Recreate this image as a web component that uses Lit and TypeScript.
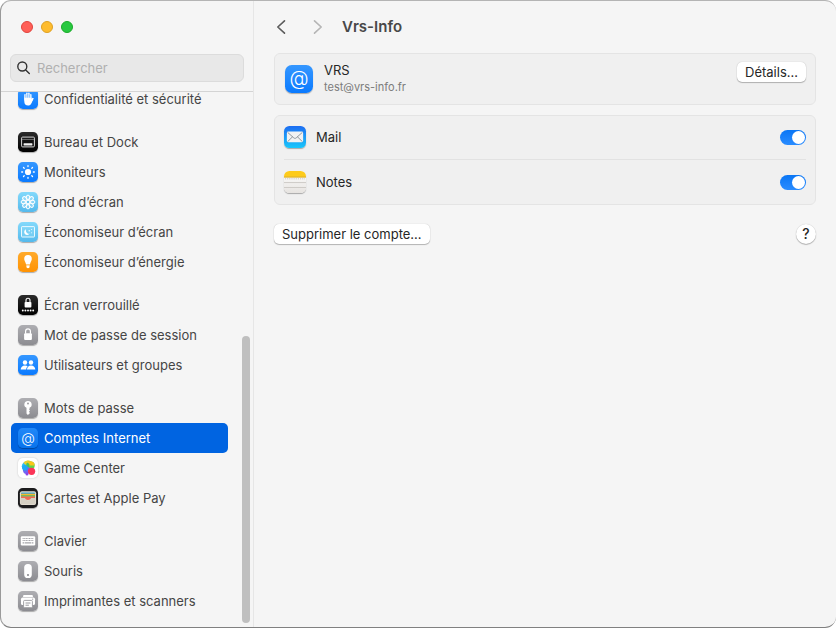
import { LitElement, html, svg, css } from "lit";
import { customElement, property } from "lit/decorators.js";
import { classMap } from "lit/directives/class-map.js";

const glyphs: Record<string, unknown> = {
  hand: svg`<g fill="none" stroke="#fff" stroke-linecap="round" stroke-width="1.5">
    <path d="M7 11V5.8M8.9 10V4.300M10.900 10V4.300M12.800 11V5.800M14.800 9.600 12.800 13"/></g>
    <path fill="#fff" d="M6.300 8.600h7.200v2l1.300-1.600.7.6-2.200 4.800c-.7 1.400-1.700 2-3.200 2-2.400 0-3.800-1.600-3.800-4z"/>
    <path d="M7.950 5.800V9M9.900 5V9M11.850 5.800V9" stroke="#3d9bff" stroke-width=".4"/>`,
  dock: svg`<rect x="3.600" y="5.100" width="12.800" height="9.800" rx="1" fill="#111" stroke="#d8d8d8" stroke-width="1"/>
    <path d="M4 7.400h12" stroke="#8a8a8a" stroke-width=".8"/>
    <rect x="5.600" y="11.300" width="8.800" height="2.200" rx=".4" fill="#f2f2f2"/>`,
  sun: svg`<circle cx="10" cy="10" r="3.100" fill="#fff"/>
    <g stroke="#fff" stroke-width="1.300" stroke-linecap="round"><path d="M10 3.700v.9M10 15.400v.9M3.700 10h.9M15.400 10h.9M5.500 5.500l.7.7M13.800 13.800l.7.7M5.500 14.500l.7-.7M13.800 6.200l.7-.7"/></g>`,
  flower: svg`<g fill="#ffffff38" stroke="#fff" stroke-width="1">
    ${[0, 45, 90, 135, 180, 225, 270, 315].map(
      (a) => svg`<ellipse cx="10" cy="5.500" rx="1.800" ry="2.400" transform="rotate(${a} 10 10)"/>`
    )}</g><circle cx="10" cy="10" r="1.800" fill="#6cc9f3" stroke="#fff" stroke-width="1"/>`,
  saver: svg`<rect x="3.500" y="4.600" width="13" height="10.400" rx=".6" fill="#8fdcf8" fill-opacity=".4" stroke="#e9f9ff" stroke-width="1"/>
    <path fill="#fff" d="M8 7.200a3 3 0 1 0 3.700 4.400C9.200 12.300 7.400 9.700 8 7.200z"/>
    <circle cx="11.200" cy="8.800" r=".7" fill="#fff"/><circle cx="13.600" cy="10.800" r=".5" fill="#fff"/><circle cx="13.600" cy="7.500" r=".5" fill="#fff"/>`,
  bulb: svg`<path fill="#fff" d="M10 3a3.800 3.800 0 0 0-3.800 3.900c0 2 1.500 3 1.900 5.600h3.800c.4-2.600 1.900-3.600 1.900-5.600A3.800 3.800 0 0 0 10 3zM8.400 13.200h3.200v1.300c0 1-.6 1.700-1.600 1.700s-1.600-.7-1.600-1.700z"/>
    <path d="M8.200 12.900h3.600" stroke="#ffc46b" stroke-width=".6"/>`,
  lockdots: svg`<rect x="6.600" y="6.900" width="6.800" height="5.600" rx=".9" fill="#fff"/>
    <path d="M8 7.200V5.300a2 2 0 0 1 4 0v1.900" fill="none" stroke="#fff" stroke-width="1.100"/>
    <g fill="#fff"><circle cx="4.800" cy="15.500" r=".95"/><circle cx="7.400" cy="15.500" r=".95"/><circle cx="10" cy="15.500" r=".95"/><circle cx="12.600" cy="15.500" r=".95"/><circle cx="15.200" cy="15.500" r=".95"/></g>`,
  lock: svg`<rect x="6.100" y="8.200" width="7.800" height="6.700" rx="1" fill="#fff"/>
    <path d="M7.600 8.700V6.200a2.400 2.400 0 0 1 4.800 0v2.500" fill="none" stroke="#fff" stroke-width="1.200"/>`,
  users: svg`<g fill="#fff"><circle cx="7" cy="7.500" r="2.200"/><circle cx="13" cy="7.500" r="2.200"/>
    <path d="M2.700 14.600c0-2.600 1.800-4.200 4.300-4.200 1.100 0 2 .3 2.700.9-1 .9-1.500 1.900-1.500 3.300zM9 14.600c0-2.600 1.600-4.200 4-4.200 2.600 0 4.300 1.600 4.300 4.200z"/></g>`,
  key: svg`<path fill="#fff" fill-rule="evenodd" d="M10 2.900a3.600 3.600 0 0 0-1.500 6.900v5.600l1.400 1.500 2.100-2-1.100-1.100 1.100-1.200-1-1.100.5-.6V9.800A3.600 3.600 0 0 0 10 2.900zm0 1.500a1.100 1.100 0 1 1 0 2.200 1.100 1.100 0 0 1 0-2.200z"/>`,
  game: svg`<circle cx="8.500" cy="8.200" r="4.700" fill="#2fbdf3"/>
    <path d="M5.400 5a5 5 0 0 1 8.200-.9L10.500 9z" fill="#e8cf2b"/>
    <circle cx="12.600" cy="7.600" r="4.100" fill="#5fd34b"/>
    <path d="M9.400 4.600a4.200 4.200 0 0 1 7.300 3H11z" fill="#f9c51a"/>
    <path d="M8.600 5.300c1.500-.6 2.700.2 2.900 1.800L10.600 11 8 9.500z" fill="#42c65c"/>
    <circle cx="8.600" cy="12.300" r="3.600" fill="#6f66f3"/><circle cx="6.900" cy="9.800" r="2.800" fill="#1fa9f2"/>
    <circle cx="9" cy="16" r="1.500" fill="#8b46e8"/><circle cx="13.600" cy="13.300" r="3.600" fill="#fb3558"/>`,
  wallet: svg`<rect x="1.900" y="3.200" width="16.200" height="13.800" rx="2" fill="#e4dfd3"/>
    <path d="M3 6.200V5.400c0-.6.500-1 1-1h12c.5 0 1 .4 1 1v.8z" fill="#3d9fd0"/>
    <path d="M3 5.800h14v1.700H3z" fill="#f7b92c"/><path d="M3 7.300h14v1.500H3z" fill="#58b547"/><path d="M3 8.400h14v2.200H3z" fill="#f06a55"/>
    <path d="M2.600 10h3.900c1.300 0 1.100 2.400 3.500 2.400s2.200-2.400 3.500-2.400h3.900v5c0 .8-.5 1.300-1.300 1.300H3.900c-.8 0-1.300-.5-1.300-1.300z" fill="#d5d0c4"/>
    <path d="M6.800 9.700h6.400c-.6 1.200-1 2.300-3.200 2.300S7.400 10.900 6.800 9.700z" fill="#ee6b56"/>`,
  keyboard: svg`<rect x="2.800" y="5.300" width="14.400" height="9.200" rx="1.200" fill="#fff"/>
    <path d="M4.600 7.500h10.800M4.600 9.500h10.800" stroke="#a5a5aa" stroke-width="1.200" stroke-dasharray="1.100 .5"/>
    <path d="M4.600 11.800h1.500m.6 0h6.600m.6 0h1.500" stroke="#a5a5aa" stroke-width="1.200"/>`,
  mouse: svg`<rect x="6.200" y="3" width="7.600" height="14" rx="3.600" fill="#fff"/><circle cx="10" cy="14" r=".9" fill="#77777c"/>`,
  printer: svg`<path d="M6.300 3.900h7.400c.7 0 1.200.5 1.200 1.200v.9H5.100v-.9c0-.7.500-1.200 1.200-1.200z" fill="#fff"/>
    <rect x="3" y="6.600" width="14" height="7.400" rx="1.600" fill="#fff"/>
    <rect x="5.600" y="9.400" width="8.800" height="7.300" rx="1" fill="#fff" stroke="#98989d" stroke-width=".9"/>
    <path d="M7.500 12h5M7.500 14.200h3.400" stroke="#98989d" stroke-width="1"/><circle cx="14.700" cy="8.200" r=".6" fill="#98989d"/>`,
  mail: svg`<rect x="2.600" y="5.100" width="14.800" height="9.700" rx="1.300" fill="#f1f2f3"/>
    <path d="M3.300 14.200 8 9.600m4 0 4.700 4.600M3.300 5.800l5.600 5c.7.6 1.500.6 2.200 0l5.600-5" fill="none" stroke="#8d969e" stroke-width=".9"/>`,
  notes: svg`<path d="M0 0h20v5.800H0z" fill="#fdcb1b"/><path d="M0 5.500h20" stroke="#c99f3c" stroke-width=".6"/>
    <path d="M1 7.100h18" stroke="#a9a6a0" stroke-width=".7" stroke-dasharray=".7 1"/>
    <path d="M0 10.500h20M0 15h20" stroke="#c9c6c2" stroke-width=".8"/>`,
};

@customElement("app-icon")
class AppIcon extends LitElement {
  @property() name = "";
  @property() tone = "blue";
  static styles = css`
    :host { display: block; flex: none; width: 20px; height: 20px; container-type: size; }
    .tile {
      width: 100%; height: 100%; border-radius: 24%; overflow: hidden;
      display: grid; place-items: center; color: #fff;
      box-shadow: 0 1px 1px #0000004d;
    }
    svg { width: 100%; height: 100%; display: block; }
    .at { font: 300 70cqh/1 Inter, sans-serif; }
    .blue { background: linear-gradient(#3597ff, #0a7aff); }
    .flat { background: linear-gradient(#2188f8, #0873ed); }
    .black { background: linear-gradient(#2b2b2b, #000); }
    .sky { background: linear-gradient(#83d9fb, #55b9ec); }
    .orange { background: linear-gradient(#ffaa2b, #ff9202); }
    .gray { background: linear-gradient(#aeaeb2, #8c8c91); }
    .white { background: #fff; box-shadow: 0 0 2px #00000033; }
    .dark { background: #1b1b1d; }
    .mail { background: linear-gradient(#1d6df2, #19c7fb); }
    .notes { background: linear-gradient(#fff, #e6e3e0); }
  `;
  render() {
    return html`<div class="tile ${this.tone}">
      ${this.name === "at"
        ? html`<span class="at" aria-hidden="true">@</span>`
        : html`<svg viewBox="0 0 20 20" aria-hidden="true">${glyphs[this.name]}</svg>`}
    </div>`;
  }
}

type Item = [label: string, icon: string, tone: string];

const groups: Item[][] = [
  [["Confidentialité et sécurité", "hand", "blue"]],
  [
    ["Bureau et Dock", "dock", "black"],
    ["Moniteurs", "sun", "blue"],
    ["Fond d’écran", "flower", "sky"],
    ["Économiseur d’écran", "saver", "sky"],
    ["Économiseur d’énergie", "bulb", "orange"],
  ],
  [
    ["Écran verrouillé", "lockdots", "black"],
    ["Mot de passe de session", "lock", "gray"],
    ["Utilisateurs et groupes", "users", "blue"],
  ],
  [
    ["Mots de passe", "key", "gray"],
    ["Comptes Internet", "at", "flat"],
    ["Game Center", "game", "white"],
    ["Cartes et Apple Pay", "wallet", "dark"],
  ],
  [
    ["Clavier", "keyboard", "gray"],
    ["Souris", "mouse", "gray"],
    ["Imprimantes et scanners", "printer", "gray"],
  ],
];

const services: Item[] = [
  ["Mail", "mail", "mail"],
  ["Notes", "notes", "notes"],
];

@customElement("app-root")
class AppRoot extends LitElement {
  @property() selected = "Comptes Internet";

  static styles = css`
    * { box-sizing: border-box; }
    :host {
      display: block; height: 100vh; background: #fff;
      font: 13px/16px Inter, sans-serif; color: #262626;
    }
    button, input { font: inherit; color: inherit; margin: 0; }
    button { border: 0; padding: 0; background: none; }
    .window {
      display: grid; grid-template-columns: 253px 1fr; height: 100%;
      background: #f5f5f5; border: 1px solid #9a9a9a; border-top-color: #b4b4b4;
      border-bottom-color: #808080; border-right: 0; border-radius: 11px; overflow: hidden;
    }
    .sidebar {
      display: flex; flex-direction: column; min-height: 0;
      border-right: 1px solid #e6e6e6;
    }
    .lights { display: flex; gap: 8px; padding: 20px 20px 0; }
    .light { width: 12px; height: 12px; border-radius: 50%; border: 1px solid; }
    .close { background: #ff5f57; border-color: #e0443e; }
    .min { background: #febc2e; border-color: #dea123; }
    .max { background: #28c840; border-color: #1aab29; }
    .search {
      display: flex; align-items: center; gap: 6px; height: 28px;
      margin: 21px 9px 9px; padding: 0 6px;
      background: #e8e8e8; border: 1px solid #dcdcdc; border-radius: 6px;
    }
    .search svg { flex: none; width: 14px; height: 14px; }
    .search input { flex: 1; min-width: 0; border: 0; padding: 0; background: none; outline: none; }
    .search input::placeholder { color: #b0b0b0; opacity: 1; }
    .scroller {
      position: relative; flex: 1; min-height: 0; overflow: hidden;
      display: flex; flex-direction: column; justify-content: flex-end;
      border-top: 1px solid #d4d4d4; padding: 0 24px 11px 10px;
    }
    .thumb {
      position: absolute; right: 3px; bottom: 4px; width: 8px; height: 287px;
      border-radius: 4px; background: #bfbfbf;
    }
    .groups { display: flex; flex-direction: column; gap: 13px; flex: none; }
    .item {
      display: flex; align-items: center; gap: 6px; width: 217px; height: 30px;
      padding: 0 7px; border-radius: 5px; text-align: left; color: #454545; white-space: nowrap;
    }
    .item.active { background: #0064e1; color: #fff; }
    .main { padding: 0 20px; min-width: 0; }
    .bar { display: flex; align-items: center; height: 52px; }
    .nav { width: 14px; height: 16px; margin-right: 22px; color: #5c5c5c; }
    .nav:disabled { color: #b5b5b5; }
    .nav svg { display: block; width: 14px; height: 16px; }
    h1 { margin: 0 0 0 -4px; font-size: 15px; line-height: 20px; font-weight: 600; color: #484848; }
    .card { background: #f0f0f0; border: 1px solid #e4e4e4; border-radius: 6px; margin-bottom: 10px; }
    .account { display: flex; align-items: center; gap: 11px; height: 52px; padding: 0 9px 0 10px; }
    .account app-icon { width: 28px; height: 28px; }
    .who { flex: 1; min-width: 0; }
    .who div { line-height: 17px; }
    .who .address { font-size: 11px; color: #7c7c7c; }
    .push {
      height: 20px; padding: 0 8px; border-radius: 5px; background: #fff; white-space: nowrap;
      box-shadow: 0 0 1px #00000040, 0 1px 1px #00000040;
    }
    .account .push { align-self: flex-start; margin-top: 8px; }
    .services { padding: 0 9px; }
    .service { display: flex; align-items: center; gap: 10px; height: 43px; padding-bottom: 1px; cursor: default; }
    .service app-icon { width: 22px; height: 22px; }
    .service + .service { height: 45px; padding-bottom: 0; border-top: 1px solid #e2e2e2; }
    .service span { flex: 1; }
    .switch {
      appearance: none; width: 26px; height: 15px; padding: 1px; border-radius: 8px;
      background: #c8c8c8; display: flex;
    }
    .switch:checked { background: linear-gradient(#0a76f5, #2a8cff); justify-content: flex-end; }
    .switch::before { content: ""; width: 13px; height: 13px; border-radius: 50%; background: #fff; }
    .foot { display: flex; justify-content: space-between; padding-top: 9px; }
    .help {
      width: 20px; height: 20px; border-radius: 50%; background: #fff; font-size: 14px; font-weight: 500;
      box-shadow: 0 0 1px #00000040, 0 1px 1px #00000040;
    }
  `;

  render() {
    return html`<div class="window">
      <aside class="sidebar">
        <div class="lights">
          <button class="light close" aria-label="Fermer"></button>
          <button class="light min" aria-label="Réduire"></button>
          <button class="light max" aria-label="Agrandir"></button>
        </div>
        <label class="search">
          <svg viewBox="0 0 14 14" fill="none" stroke="#333" stroke-width="1.400" stroke-linecap="round" aria-hidden="true">
            <circle cx="5.300" cy="5.500" r="4.500" /><path d="m8.700 8.900 3.600 3.500" />
          </svg>
          <input type="search" placeholder="Rechercher" aria-label="Rechercher" />
        </label>
        <div class="scroller">
          <nav class="groups">
            ${groups.map((g) => html`<div>
              ${g.map(([label, icon, tone]) => html`<button
                class=${classMap({ item: true, active: label === this.selected })}
                @click=${() => (this.selected = label)}>
                <app-icon name=${icon} tone=${tone}></app-icon><span>${label}</span>
              </button>`)}
            </div>`)}
          </nav>
          <div class="thumb"></div>
        </div>
      </aside>
      <main class="main">
        <header class="bar">
          <button class="nav" aria-label="Précédent">
            <svg viewBox="0 0 14 16" fill="none" stroke="currentColor" stroke-width="1.600" stroke-linecap="round" stroke-linejoin="round"><path d="M10.500 1.800 3.800 8l6.700 6.200" /></svg>
          </button>
          <button class="nav" aria-label="Suivant" disabled>
            <svg viewBox="0 0 14 16" fill="none" stroke="currentColor" stroke-width="1.600" stroke-linecap="round" stroke-linejoin="round"><path d="M4.500 1.800 11.200 8l-6.700 6.200" /></svg>
          </button>
          <h1>Vrs-Info</h1>
        </header>
        <section class="card account">
          <app-icon name="at" tone="blue"></app-icon>
          <div class="who"><div>VRS</div><div class="address">test@vrs-info.fr</div></div>
          <button class="push">Détails…</button>
        </section>
        <section class="card services">
          ${services.map(([label, icon, tone]) => html`<label class="service">
            <app-icon name=${icon} tone=${tone}></app-icon><span>${label}</span>
            <input class="switch" type="checkbox" role="switch" checked />
          </label>`)}
        </section>
        <footer class="foot">
          <button class="push">Supprimer le compte…</button>
          <button class="help" aria-label="Aide">?</button>
        </footer>
      </main>
    </div>`;
  }
}
